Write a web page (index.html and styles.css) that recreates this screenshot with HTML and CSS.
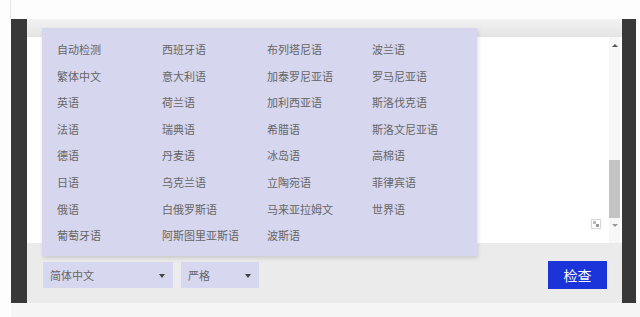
FILE: index.html
```html
<!DOCTYPE html>
<html lang="zh">
<head>
<meta charset="UTF-8">
<title>检查</title>
<link rel="stylesheet" href="styles.css">
</head>
<body>
  <div class="top-strip"></div>
  <div class="frame">
    <div class="editor">
      <div class="toolbar"></div>
      <div class="text-area">
        <div class="text-body">
          <svg class="resize-icon" width="10" height="10" viewBox="0 0 10 10">
            <rect x="0.5" y="0.5" width="9" height="9" fill="none" stroke="#aaa" stroke-dasharray="1 1"/>
            <rect x="2" y="2" width="3" height="3" fill="#bbb"/>
            <rect x="5" y="5" width="3" height="3" fill="#999"/>
          </svg>
        </div>
        <div class="scrollbar">
          <span class="arrow up"></span>
          <div class="thumb"></div>
          <span class="arrow down"></span>
        </div>
      </div>
      <div class="bottom-bar">
        <div class="select wide">简体中文<span class="caret"></span></div>
        <div class="select narrow">严格<span class="caret"></span></div>
        <button class="check-button">检查</button>
      </div>
    </div>

    <!-- language dropdown -->
    <div class="lang-menu">
      <span>自动检测</span>
      <span>繁体中文</span>
      <span>英语</span>
      <span>法语</span>
      <span>德语</span>
      <span>日语</span>
      <span>俄语</span>
      <span>葡萄牙语</span>
      <span>西班牙语</span>
      <span>意大利语</span>
      <span>荷兰语</span>
      <span>瑞典语</span>
      <span>丹麦语</span>
      <span>乌克兰语</span>
      <span>白俄罗斯语</span>
      <span>阿斯图里亚斯语</span>
      <span>布列塔尼语</span>
      <span>加泰罗尼亚语</span>
      <span>加利西亚语</span>
      <span>希腊语</span>
      <span>冰岛语</span>
      <span>立陶宛语</span>
      <span>马来亚拉姆文</span>
      <span>波斯语</span>
      <span>波兰语</span>
      <span>罗马尼亚语</span>
      <span>斯洛伐克语</span>
      <span>斯洛文尼亚语</span>
      <span>高棉语</span>
      <span>菲律宾语</span>
      <span>世界语</span>
    </div>
  </div>
  <div class="bottom-strip"></div>
</body>
</html>
```

FILE: styles.css
```css
body {
  margin: 0;
  background: #fdfdfd;
  font-family: "Noto Sans CJK SC", "Noto Sans", sans-serif;
  width: 640px;
  height: 317px;
  overflow: hidden;
}
.top-strip {
  height: 19px;
  margin-left: 10px;
  border-left: 1px solid #e6e6e6;
}
.frame {
  position: relative;
  margin-left: 11px;
  width: 595px;
  padding: 0 14px 0 16px;
  background: #383838;
}
.editor {
  display: flex;
  flex-direction: column;
}
.toolbar {
  height: 18px;
  background: linear-gradient(#f2f2f2, #e4e4e4);
}
.text-area {
  display: flex;
  height: 206px;
  background: #fff;
}
.text-body {
  flex: 1;
  position: relative;
}
.resize-icon {
  position: absolute;
  right: 8px;
  bottom: 14px;
}
.scrollbar {
  width: 11px;
  margin-right: 2px;
  background: #f7f7f7;
  display: flex;
  flex-direction: column;
  align-items: center;
}
.arrow {
  width: 0;
  height: 0;
  border-left: 3px solid transparent;
  border-right: 3px solid transparent;
}
.arrow.up {
  margin-top: 7px;
  border-bottom: 3px solid #555;
}
.thumb {
  width: 11px;
  height: 58px;
  margin-top: 113px;
  background: #c4c4c4;
}
.arrow.down {
  margin-top: 6px;
  border-top: 3px solid #999;
}
.bottom-bar {
  height: 60px;
  background: #ebebeb;
  display: flex;
  align-items: flex-start;
  padding: 19px 15px 0 16px;
  box-sizing: border-box;
}
.select {
  position: relative;
  height: 26px;
  line-height: 26px;
  background: #d7d7f0;
  color: #666;
  font-size: 11px;
  padding-left: 7px;
  box-sizing: border-box;
}
.select.wide {
  width: 130px;
}
.select.narrow {
  width: 78px;
  margin-left: 8px;
}
.caret {
  position: absolute;
  top: 12px;
  right: 8px;
  border-left: 3px solid transparent;
  border-right: 3px solid transparent;
  border-top: 4px solid #444;
}
.check-button {
  margin-left: auto;
  margin-top: -1px;
  width: 59px;
  height: 28px;
  border: none;
  background: #1b34d9;
  color: #fff;
  font-family: inherit;
  font-size: 14px;
  padding: 0;
}
.lang-menu {
  position: absolute;
  left: 31px;
  top: 9px;
  width: 435px;
  height: 228px;
  box-sizing: border-box;
  padding: 8px 0 0 15px;
  background: #d6d6ee;
  box-shadow: 1px 2px 4px rgba(0, 0, 0, 0.15);
  display: grid;
  grid-template-rows: repeat(8, 26.6px);
  grid-template-columns: repeat(4, 105px);
  grid-auto-flow: column;
  align-content: start;
}
.lang-menu span {
  font-size: 11px;
  color: #666;
  line-height: 26.6px;
}
.bottom-strip {
  height: 14px;
  margin-left: 11px;
  background: #f5f5f5;
}
```
